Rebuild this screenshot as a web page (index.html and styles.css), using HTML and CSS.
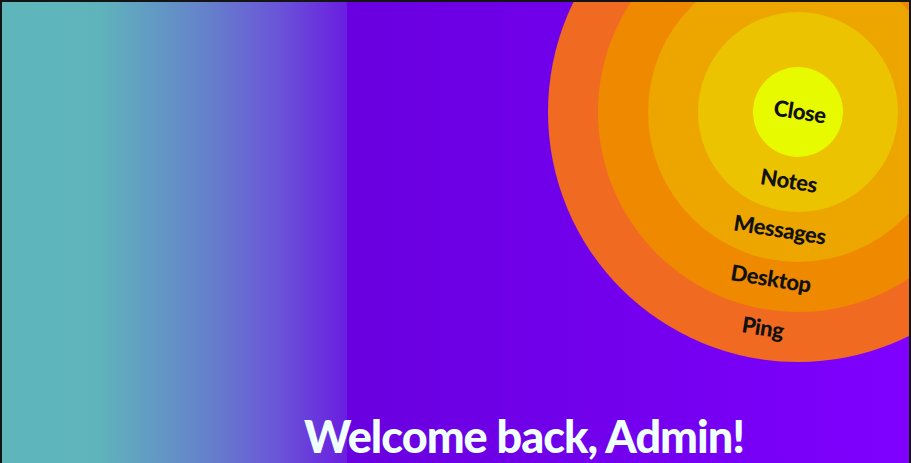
FILE: index.html
```html
<!DOCTYPE html>
<html lang="en">
<head>
<meta charset="utf-8">
<title>Dashboard</title>
<link rel="stylesheet" href="styles.css">
</head>
<body>
<div class="frame">
  <aside class="sidebar"></aside>
  <main class="main"></main>
  <h1 class="welcome">Welcome back, Admin!</h1>
  <nav class="radial">
    <div class="ring r5">
      <div class="ring r4">
        <div class="ring r3">
          <div class="ring r2">
            <div class="ring r1"></div>
          </div>
        </div>
      </div>
    </div>
    <span class="label l-close">Close</span>
    <span class="label l-notes">Notes</span>
    <span class="label l-messages">Messages</span>
    <span class="label l-desktop">Desktop</span>
    <span class="label l-ping">Ping</span>
  </nav>
</div>
</body>
</html>
```
FILE: styles.css
```css
html, body {
  margin: 0;
  padding: 0;
  overflow: hidden;
}
body {
  font-family: Lato, "Open Sans", sans-serif;
}
.frame {
  position: relative;
  box-sizing: border-box;
  width: 911px;
  height: 490px;
  border: 2px solid #141414;
  display: grid;
  grid-template-columns: 345px 1fr;
  grid-template-rows: 1fr auto;
  overflow: hidden;
}
.sidebar {
  grid-column: 1;
  grid-row: 1 / 3;
  background: linear-gradient(to right, #5eb6bb 0%, #5fb4bb 28%, #6580cc 60%, #6a55d8 80%, #6a1ee0 100%);
}
.main {
  grid-column: 2;
  grid-row: 1 / 3;
  background: linear-gradient(to right, #6900df 0%, #7200ec 45%, #7f00ff 100%);
}
.welcome {
  grid-column: 1 / 3;
  grid-row: 2;
  margin: 0 0 27px 0;
  padding-left: 302px;
  position: relative;
  z-index: 1;
  color: #f0ffff;
  font-size: 45px;
  font-weight: 900;
  letter-spacing: -1px;
  line-height: 50px;
}
.radial {
  position: absolute;
  left: 546px;
  top: -140px;
  width: 500px;
  height: 500px;
  z-index: 2;
}
.ring {
  border-radius: 50%;
  display: flex;
  align-items: center;
  justify-content: center;
}
.r5 { width: 500px; height: 500px; background: #f06a22; }
.r4 { width: 400px; height: 400px; background: #ef8a00; }
.r3 { width: 300px; height: 300px; background: #eda500; }
.r2 { width: 200px; height: 200px; background: #ebc300; }
.r1 { width: 90px; height: 90px; background: #e8fa00; }
.label {
  position: absolute;
  transform: translate(-50%, -50%) rotate(9deg);
  font-size: 22px;
  font-weight: 900;
  color: #111;
  white-space: nowrap;
  letter-spacing: -0.4px;
}
.l-close { left: 252px; top: 249px; }
.l-notes { left: 241px; top: 318px; }
.l-messages { left: 232px; top: 367px; }
.l-desktop { left: 223px; top: 416px; }
.l-ping { left: 215px; top: 465px; }
```
